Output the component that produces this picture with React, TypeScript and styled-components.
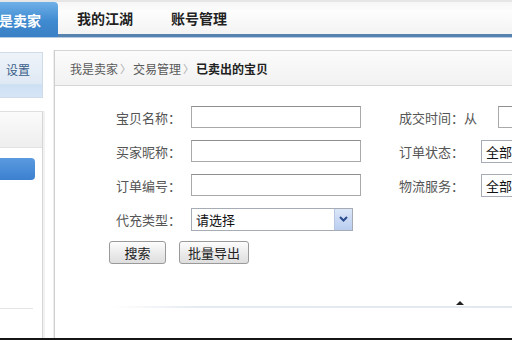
import React from "react";
import styled, { createGlobalStyle } from "styled-components";

const Global = createGlobalStyle`
  html, body { margin: 0; padding: 0; background: #fff; }
  body { width: 512px; height: 340px; overflow: hidden; font-family: "Noto Sans CJK SC", "Noto Sans", sans-serif; }
`;

const Page = styled.div`
  width: 512px;
  height: 338px;
  border-bottom: 2px solid #151515;
  overflow: hidden;
  display: flex;
  flex-direction: column;
  background: #fff;
`;

const TopBar = styled.div`
  height: 37px;
  flex: none;
  display: flex;
  align-items: stretch;
  background: linear-gradient(#f6f6f6, #fdfdfd 30%, #f3f3f3);
  border-top: 2px solid #e6e6e6;
  box-sizing: border-box;
  border-bottom: 3px solid #5682b0;
  box-shadow: 0 1px 0 #b5cbe2;
  position: relative;
  z-index: 1;
`;

const Tab = styled.div<{ $active?: boolean }>`
  display: flex;
  align-items: center;
  padding: 0 19px;
  font-size: 14px;
  font-weight: bold;
  color: ${(p) => (p.$active ? "#fff" : "#222")};
  white-space: nowrap;
  ${(p) =>
    p.$active &&
    `
    margin-left: -31px;
    margin-bottom: -3px;
    padding: 0 17px 0 16px;
    background: linear-gradient(#6fb0e8, #3f8ad0 55%, #3a80c6);
    border-radius: 0 4px 0 0;
  `}
`;

const Main = styled.div`
  flex: 1;
  display: flex;
  gap: 11px;
  padding-top: 13px;
  min-height: 0;
`;

const Sidebar = styled.div`
  width: 43px;
  flex: none;
  display: flex;
  flex-direction: column;
  gap: 13px;
  margin-top: 2px;
`;

const SideTitleBox = styled.div`
  height: 46px;
  flex: none;
  box-sizing: border-box;
  border: 1px solid #cfdbe8;
  border-left: none;
  background: linear-gradient(#eef3f9, #dfe9f4 70%, #cde0f4 72%, #d6e6f7);
  font-size: 12px;
  color: #3a5f8a;
  display: flex;
  justify-content: flex-end;
  padding: 8px 12px 0 0;
  align-items: flex-start;
`;

const SideMenu = styled.div`
  flex: 1;
  border-right: 1px solid #d6d6d6;
  border-top: 1px solid #e0e0e0;
  box-shadow: 2px 0 0 #f1f1f1;
  display: flex;
  flex-direction: column;
`;

const SideMenuHead = styled.div`
  height: 35px;
  flex: none;
  background: linear-gradient(#fbfbfb, #eeeeee);
  border-bottom: 1px solid #e2e2e2;
`;

const SideItem = styled.div`
  margin: 10px 7px 0 0;
  height: 22px;
  border-radius: 0 4px 4px 0;
  background: linear-gradient(#5b9ae0, #3b80cf);
`;

const SideDivider = styled.div`
  margin: auto 9px 29px 0;
  border-top: 1px solid #e4e4e4;
`;

const Content = styled.div`
  flex: 1;
  border-left: 1px solid #cfcfcf;
  border-top: 1px solid #d4d4d4;
  display: flex;
  flex-direction: column;
  box-shadow: -1px 0 0 #eee;
`;

const Crumbs = styled.div`
  height: 34px;
  flex: none;
  display: flex;
  align-items: center;
  padding-left: 15px;
  background: linear-gradient(#fbfbfb, #f2f2f2);
  border-bottom: 1px solid #d6d6d6;
  font-size: 12px;
  color: #5a5a5a;
  white-space: nowrap;
`;

const CrumbSep = styled.span`
  color: #aaa;
  margin: 0 2px;
  font-size: 11px;
`;

const CrumbCurrent = styled.span`
  font-weight: bold;
  color: #222;
`;

const Form = styled.div`
  padding-top: 14px;
  display: flex;
  flex-direction: column;
`;

const Row = styled.div`
  height: 34px;
  display: flex;
  align-items: center;
  padding-left: 54px;
  white-space: nowrap;
`;

const Label = styled.span`
  width: 72px;
  text-align: right;
  font-size: 13px;
  color: #555;
  flex: none;
`;

const RightLabel = styled.span<{ $w: number }>`
  width: ${(p) => p.$w}px;
  margin-left: 38px;
  font-size: 13px;
  color: #555;
  flex: none;
`;

const TextInput = styled.div<{ $w: number }>`
  width: ${(p) => p.$w}px;
  height: 22px;
  box-sizing: border-box;
  border: 1px solid #a9a9a9;
  border-top-color: #8f8f8f;
  background: #fff;
  margin-left: 10px;
  flex: none;
`;

const SelectBox = styled.div<{ $w: number; $ml: number }>`
  width: ${(p) => p.$w}px;
  height: 23px;
  box-sizing: border-box;
  border: 1px solid #a5acb5;
  background: #fff;
  margin-left: ${(p) => p.$ml}px;
  flex: none;
  display: flex;
  align-items: center;
  justify-content: space-between;
  font-size: 13px;
  color: #111;
  padding-left: 4px;
`;

const SelectArrow = styled.div`
  width: 17px;
  height: 21px;
  background: linear-gradient(#dbe6f8, #b9cdef);
  border-left: 1px solid #b7c7e2;
  display: flex;
  align-items: center;
  justify-content: center;
`;

const ButtonRow = styled.div`
  display: flex;
  gap: 13px;
  padding-left: 54px;
  margin-top: 5px;
`;

const Button = styled.div<{ $w: number }>`
  width: ${(p) => p.$w}px;
  height: 23px;
  box-sizing: border-box;
  border: 1px solid #9a9a9a;
  border-radius: 3px;
  background: linear-gradient(#fdfdfd, #ececec 50%, #dedede);
  display: flex;
  align-items: center;
  justify-content: center;
  font-size: 13px;
  color: #222;
`;

const TableTop = styled.div`
  margin: 42px 0 0 56px;
  height: 2px;
  background: linear-gradient(90deg, rgba(230, 236, 242, 0), #e4eaf1 20%, #e2e8ee);
  position: relative;
`;

const SortMark = styled.div`
  position: absolute;
  left: 345px;
  top: -5px;
  width: 0;
  height: 0;
  border-left: 4px solid transparent;
  border-right: 4px solid transparent;
  border-bottom: 4px solid #222;
`;

export default function App() {
  return (
    <>
      <Global />
      <Page>
        <TopBar>
          <Tab $active>我是卖家</Tab>
          <Tab>我的江湖</Tab>
          <Tab>账号管理</Tab>
        </TopBar>
        <Main>
          <Sidebar>
            <SideTitleBox>设置</SideTitleBox>
            <SideMenu>
              <SideMenuHead />
              <SideItem />
              <SideDivider />
            </SideMenu>
          </Sidebar>
          <Content>
            <Crumbs>
              我是卖家<CrumbSep>〉</CrumbSep>交易管理<CrumbSep>〉</CrumbSep>
              <CrumbCurrent>已卖出的宝贝</CrumbCurrent>
            </Crumbs>
            <Form>
              <Row>
                <Label>宝贝名称：</Label>
                <TextInput $w={170} />
                <RightLabel $w={89}>成交时间：从</RightLabel>
                <TextInput $w={60} />
              </Row>
              <Row>
                <Label>买家昵称：</Label>
                <TextInput $w={170} />
                <RightLabel $w={76}>订单状态：</RightLabel>
                <SelectBox $w={80} $ml={6}>全部</SelectBox>
              </Row>
              <Row>
                <Label>订单编号：</Label>
                <TextInput $w={170} />
                <RightLabel $w={76}>物流服务：</RightLabel>
                <SelectBox $w={80} $ml={6}>全部</SelectBox>
              </Row>
              <Row>
                <Label>代充类型：</Label>
                <SelectBox $w={162} $ml={10}>
                  请选择
                  <SelectArrow>
                    <svg width="9" height="6" viewBox="0 0 9 6">
                      <path d="M1 1 L4.5 4.5 L8 1" stroke="#2b4c8c" strokeWidth="2" fill="none" />
                    </svg>
                  </SelectArrow>
                </SelectBox>
              </Row>
              <ButtonRow>
                <Button $w={57}>搜索</Button>
                <Button $w={70}>批量导出</Button>
              </ButtonRow>
              <TableTop>
                <SortMark />
              </TableTop>
            </Form>
          </Content>
        </Main>
      </Page>
    </>
  );
}
